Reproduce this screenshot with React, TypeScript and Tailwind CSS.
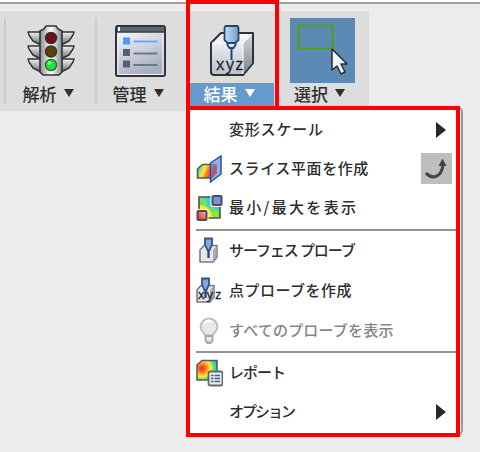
import type { ReactNode } from 'react'
import clsx from 'clsx'

const TrafficLightIcon = () => (
  <svg width="48" height="52" viewBox="0 0 48 52">
    <defs>
      <linearGradient id="metal" x1="0" x2="1">
        <stop offset="0" stopColor="#8b8e92" />
        <stop offset=".5" stopColor="#ffffff" />
        <stop offset="1" stopColor="#85888d" />
      </linearGradient>
      <linearGradient id="wing" x1="0" y1="0" x2="0" y2="1">
        <stop offset="0" stopColor="#f2f3f4" />
        <stop offset="1" stopColor="#666a6f" />
      </linearGradient>
    </defs>
    {[7, 21, 34].map((y) => (
      <g key={y} fill="url(#wing)" stroke="#303336" strokeWidth="1.4" strokeLinejoin="round">
        <path d={`M14 ${y}H1l1 3 4 6 8 4z`} />
        <path d={`M34 ${y}h13l-1 3-4 6-8 4z`} />
      </g>
    ))}
    <path d="M17 4l2-3h10l2 3 4 2v41l-3 3H16l-3-3V6z" fill="url(#metal)" stroke="#303336" strokeWidth="1.6" />
    <circle cx="24" cy="13" r="5.5" fill="#6b1014" stroke="#39282a" strokeWidth="1.4" />
    <circle cx="24" cy="26.5" r="5.5" fill="#5b4307" stroke="#353027" strokeWidth="1.4" />
    <circle cx="24" cy="40" r="5.5" fill="#18e83b" stroke="#27672f" strokeWidth="1.4" />
    <circle cx="22.5" cy="38" r="2" fill="#77ff80" />
  </svg>
)

const ManageIcon = () => (
  <svg width="51" height="52" viewBox="0 0 51 52">
    <defs>
      <linearGradient id="panel" x1="0" y1="0" x2=".4" y2="1">
        <stop offset="0" stopColor="#ffffff" />
        <stop offset="1" stopColor="#a8afc1" />
      </linearGradient>
    </defs>
    <rect x="1" y="1" width="49" height="50" rx="2" fill="url(#panel)" stroke="#303338" strokeWidth="2" />
    <path d="M2 2h47v5H2z" fill="#596774" />
    <path d="M3 2h2v4H3z" fill="#ffffff" />
    <path d="M2 7h47" stroke="#333b43" strokeWidth="1.4" />
    <path d="M3 8.5v41h45v-41" fill="none" stroke="#eef1f5" strokeWidth="1.2" />
    <path d="M8 12.500h7v7H8z" fill="#4f9aff" />
    <path d="M8 24h7v7H8zM8 35.500h7v7H8z" fill="#56616f" />
    <path d="M18.500 16.500h24" stroke="#68a7ff" strokeWidth="2" />
    <path d="M18.500 28.500h24M18.500 40h24" stroke="#6c7788" strokeWidth="2" />
  </svg>
)

const ResultsIcon = () => (
  <svg width="46" height="52" viewBox="0 0 46 52">
    <defs>
      <linearGradient id="cube" x1="0" y1="0" x2="0" y2="1">
        <stop offset="0" stopColor="#fafbfc" />
        <stop offset="1" stopColor="#b9bfcc" />
      </linearGradient>
      <linearGradient id="side" x1="0" y1="0" x2="0" y2="1">
        <stop offset="0" stopColor="#d5d8dc" />
        <stop offset="1" stopColor="#7d838d" />
      </linearGradient>
      <linearGradient id="probe" x1="0" x2="1">
        <stop offset="0" stopColor="#c8ddf5" />
        <stop offset="1" stopColor="#729dce" />
      </linearGradient>
    </defs>
    <path d="M2 18L12 8h32v30L34 50H4l-2-2z" fill="url(#cube)" stroke="#303236" strokeWidth="2" strokeLinejoin="round" />
    <path d="M34 18L43 9v29l-9 11z" fill="url(#side)" />
    <path d="M3 18h31v31M34 18l9-9" fill="none" stroke="#ffffff" strokeWidth="1" />
    <path d="M22.500 22v13" stroke="#263e69" strokeWidth="2" />
    <path d="M18.500 17h8v3l-2 3h-4l-2-3z" fill="#dceaff" stroke="#263e69" strokeWidth="1.8" />
    <path d="M16.500 1h12l1 2v12l-3 3h-8l-3-3V3z" fill="url(#probe)" stroke="#29436e" strokeWidth="1.8" />
    <text x="7" y="45" textLength="27" fontSize="16" fontFamily="Open Sans, sans-serif" fill="#202225" stroke="#202225" strokeWidth=".3">xyz</text>
  </svg>
)

const SelectIcon = () => (
  <svg width="65" height="65" viewBox="0 0 65 65">
    <path d="M8.500 7.500h34v23h-34z" fill="none" stroke="#50a01c" strokeWidth="2.200" />
    <path d="M42 31v21l5-4 4 8 4-2-4-8h6z" fill="#f4f5f6" stroke="#292d33" strokeWidth="1.500" strokeLinejoin="round" />
  </svg>
)

const SlicePlaneIcon = () => (
  <svg width="27" height="28" viewBox="0 0 27 28">
    <defs>
      <linearGradient id="rainbow" x1="0" x2="1" y2=".3">
        <stop offset="0" stopColor="#45bddb" />
        <stop offset=".22" stopColor="#72e778" />
        <stop offset=".43" stopColor="#ffe840" />
        <stop offset=".65" stopColor="#ff781f" />
        <stop offset="1" stopColor="#ee202d" />
      </linearGradient>
    </defs>
    <path d="M1.500 14l5-4.500H20V18l-4 5H1.500z" fill="url(#rainbow)" stroke="#55575c" strokeWidth="1.600" />
    <path d="M14.500 8l10.500-7v18l-10.500 8z" fill="#7797ce" fillOpacity=".75" stroke="#2450a6" strokeWidth="1.500" />
    <path d="M16 12l5-2v8l-5 4z" fill="#bf4668" fillOpacity=".65" />
  </svg>
)

const MinMaxIcon = () => (
  <svg width="27" height="28" viewBox="0 0 27 28">
    <defs>
      <linearGradient id="low" x1="0" y1="1" x2="1" y2="0">
        <stop offset="0" stopColor="#dc2d2d" />
        <stop offset="1" stopColor="#ffb49b" />
      </linearGradient>
    </defs>
    <path d="M3 3h21v21H3z" fill="#2fd2ec" />
    <path d="M3 9c8 0 14 6 14 15H3z" fill="#7be53c" />
    <path d="M3 3h6c0 9 6 12 15 13v5C12 20 5 15 3 8z" fill="#6fe35a" />
    <path d="M3 11c7 0 13 5 14 13H3z" fill="#ffe735" />
    <path d="M15 18l9 0v6h-7z" fill="#8fe63b" />
    <path d="M3 15c5 0 9 4 9 9H3z" fill="#ff9a2b" />
    <path d="M3 3h21v21H3z" fill="none" stroke="#4c5056" strokeWidth="1.600" />
    <rect x="14.500" y="0" width="12.500" height="13" rx="2" fill="#ffffff" />
    <rect x="16.500" y="2" width="9" height="9" rx="1" fill="#7890e9" stroke="#4c4f55" strokeWidth="2" />
    <rect x="0" y="15" width="12.500" height="13" rx="2" fill="#ffffff" />
    <rect x="1.500" y="17" width="9" height="9" rx="1" fill="url(#low)" stroke="#4c4f55" strokeWidth="2" />
  </svg>
)

const ProbeIcon = ({ point = false }: { point?: boolean }) => (
  <svg width="27" height="28" viewBox="0 0 27 28">
    <g transform={point ? 'translate(-3 0)' : undefined}>
      <path d="M4 13l4-4.500h13V20l-4 5H4z" fill="#e4e7eb" stroke="#777b83" strokeWidth="1.600" strokeLinejoin="round" />
      <path d="M17 13l3.500-4v11L17 24.500z" fill="#a7acb4" />
      <path d="M12.500 12v9" stroke="#304870" strokeWidth="2.400" />
      <path d="M9 1.500h7v6L13.500 13h-2L9 7.500z" fill="#84a9db" stroke="#345388" strokeWidth="1.800" />
    </g>
    {point && (
      <text x="2" y="21.500" textLength="23" fontSize="12.500" fontFamily="Open Sans, sans-serif" fill="#222529" stroke="#222529" strokeWidth=".4">xyz</text>
    )}
  </svg>
)

const BulbIcon = () => (
  <svg width="27" height="28" viewBox="0 0 27 28">
    <path d="M9.500 18.500C8 15 4.500 14 4.500 10a8.500 8.500 0 0117 0c0 4-3.500 5-5 8.500z" fill="#e8e8e8" stroke="#bdbdbd" strokeWidth="1.800" />
    <path d="M9 6c1-2 4-3 7-1" fill="none" stroke="#ffffff" strokeWidth="2.500" />
    <path d="M9.500 19h7v5l-2 2h-3l-2-2z" fill="#d9d9d9" stroke="#a7a7a7" strokeWidth="1.800" />
    <path d="M11 21.500h4" stroke="#ffffff" strokeWidth="1.500" />
  </svg>
)

const ReportIcon = () => (
  <svg width="27" height="28" viewBox="0 0 27 28">
    <defs>
      <radialGradient id="heat" cx=".25" cy=".4" r=".85">
        <stop offset=".08" stopColor="#f4382f" />
        <stop offset=".3" stopColor="#ff951f" />
        <stop offset=".5" stopColor="#ffed38" />
        <stop offset=".68" stopColor="#66e85d" />
        <stop offset=".84" stopColor="#1bc8ee" />
        <stop offset="1" stopColor="#3766d7" />
      </radialGradient>
    </defs>
    <path d="M1 6l5-4.500h15V17l-4 4H1z" fill="url(#heat)" stroke="#55575c" strokeWidth="1.500" />
    <rect x="12.500" y="12.500" width="14" height="14" rx="2" fill="#e8ebf2" stroke="#62666e" strokeWidth="1.800" />
    <path d="M15 16.500h2.500M15 19.500h2.500M15 22.500h2.500M18.500 16.500H24M18.500 19.500H24M18.500 22.500H24" stroke="#4b5f85" strokeWidth="1.600" />
  </svg>
)

const Caret = () => (
  <svg width="10" height="8" viewBox="0 0 10 8">
    <path d="M0 0h10L5 8z" fill="currentColor" />
  </svg>
)

interface ToolButtonProps {
  label: string
  children: ReactNode
  className?: string
  labelClass?: string
}

const ToolButton = ({ label, children, className, labelClass }: ToolButtonProps) => (
  <button className={clsx('flex shrink-0 flex-col items-center', className)}>
    <span className="flex h-[65px] items-center justify-center">{children}</span>
    <span className={clsx('flex h-[23px] w-full items-center justify-center gap-[7px] pr-[5px] pb-[3px] text-[17px] leading-none font-medium', labelClass ?? 'text-[#2f2f2f]')}>
      {label}
      <Caret />
    </span>
  </button>
)

const SubmenuArrow = () => (
  <svg className="mr-2.5" width="10" height="16" viewBox="0 0 10 16">
    <path d="M0 0l10 8-10 8z" fill="#282828" />
  </svg>
)

const PopOutToggle = () => (
  <span className="mr-1 flex size-[31px] items-center justify-center bg-[#bebebe]">
    <svg width="31" height="31" viewBox="0 0 31 31">
      <path d="M5 20c5 6 15 6 17-8" fill="none" stroke="#444444" strokeWidth="3" />
      <path d="M17.500 13l4-7.500 4 7.500z" fill="#444444" />
    </svg>
  </span>
)

interface MenuItemProps {
  label: string
  textClass: string
  icon?: ReactNode
  trailing?: ReactNode
  className?: string
}

const MenuItem = ({ label, textClass, icon, trailing, className = 'h-10' }: MenuItemProps) => (
  <div className={clsx('flex items-center pl-1.5', className)}>
    <span className="flex w-[33px] shrink-0">{icon}</span>
    <span className={clsx('grow pb-[3px] leading-none font-medium whitespace-nowrap', textClass)}>{label}</span>
    {trailing}
  </div>
)

const Separator = () => <div className="ml-1.5 h-0.5 shrink-0 bg-[#929292]" />

export default function App() {
  return (
    <div className="h-[452px] w-[480px] overflow-hidden bg-[#ececec] font-['Noto_Sans_CJK_JP',sans-serif]">
      <div className="h-[11px] border-t-2 border-white">
        <div className="h-0.5 bg-[#a0a0a0]" />
      </div>
      <div className="flex h-[100px] w-[369px] bg-[#dddddd] pt-[7px]">
        <div className="ml-1 h-[86px] w-0.5 shrink-0 bg-[#cccccc]" />
        <ToolButton label="解析" className="w-[89px]">
          <TrafficLightIcon />
        </ToolButton>
        <div className="h-[86px] w-0.5 shrink-0 bg-[#cccccc]" />
        <ToolButton label="管理" className="w-[87px]">
          <ManageIcon />
        </ToolButton>
        <ToolButton label="結果" className="ml-[5px] w-[85px]" labelClass="bg-[#6699cc] text-white">
          <ResultsIcon />
        </ToolButton>
        <ToolButton label="選択" className="ml-[5px] w-[89px] pr-[3px]">
          <span className="size-[65px] bg-[#5b8ab4]">
            <SelectIcon />
          </span>
        </ToolButton>
      </div>

      <div className="relative -mt-[5px] ml-[187px] h-[330px] w-[276px] rounded-md border-2 border-[#9b9b9b] bg-white">
        <div className="flex w-[267px] flex-col pt-0.5 pl-[1px]">
          <MenuItem className="h-[39px]" label="変形スケール" textClass="text-[15px] tracking-[0.8px] text-[#2d2d2d]" trailing={<SubmenuArrow />} />
          <MenuItem className="h-[39px]" label="スライス平面を作成" textClass="text-[15px] tracking-[0.6px] text-[#2d2d2d]" icon={<SlicePlaneIcon />} trailing={<PopOutToggle />} />
          <MenuItem className="mb-[1px] h-10" label="最小/最大を表示" textClass="text-[15px] tracking-[2.3px] text-[#2d2d2d]" icon={<MinMaxIcon />} />
          <Separator />
          <MenuItem label="サーフェス プローブ" textClass="text-[15px] tracking-[-1.1px] text-[#2d2d2d]" icon={<ProbeIcon />} />
          <MenuItem label="点プローブを作成" textClass="text-[15px] tracking-[0.5px] text-[#2d2d2d]" icon={<ProbeIcon point />} />
          <MenuItem label="すべてのプローブを表示" textClass="text-[15px] tracking-[0.2px] text-[#858585]" icon={<BulbIcon />} />
          <Separator />
          <MenuItem label="レポート" textClass="text-[15px] tracking-[-1px] text-[#2d2d2d]" icon={<ReportIcon />} />
          <MenuItem className="h-[37px]" label="オプション" textClass="text-[15px] tracking-[-2px] text-[#2d2d2d]" trailing={<SubmenuArrow />} />
        </div>
      </div>

      {/* highlight frames over the button and its open menu */}
      <div className="absolute top-0 left-[186px] h-[110px] w-[93px] border-4 border-[#ff0000]" />
      <div className="absolute top-[106px] left-[186px] h-[331px] w-[274px] border-4 border-[#ff0000]" />
    </div>
  )
}
